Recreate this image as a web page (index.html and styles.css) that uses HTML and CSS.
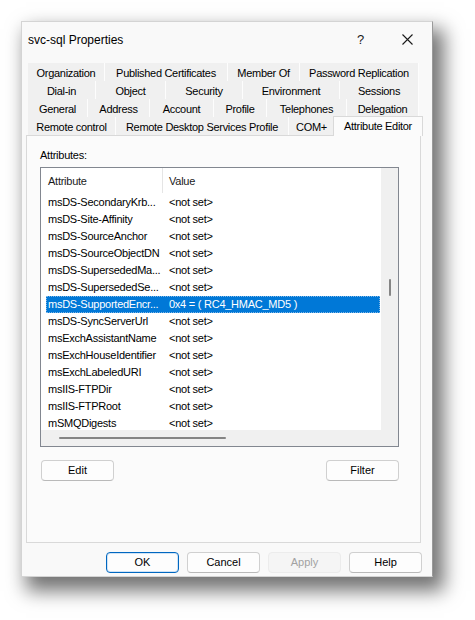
FILE: index.html
```html
<!DOCTYPE html>
<html>
<head>
<meta charset="utf-8">
<link rel="stylesheet" href="styles.css">
</head>
<body>
<div class="page">
<div class="dialog">
  <div class="titlebar">
    <span class="title">svc-sql Properties</span>
    <span class="help-q">?</span>
    <svg class="close" width="11" height="11" viewBox="0 0 11 11"><path d="M0.5 0.5 L10.5 10.5 M10.5 0.5 L0.5 10.5" stroke="#1a1a1a" stroke-width="1.1" fill="none"/></svg>
  </div>
  <div class="content">
    <div class="tabs">
      <div class="tabrow r1">
        <div class="tab">Organization</div>
        <div class="tab">Published Certificates</div>
        <div class="tab">Member Of</div>
        <div class="tab">Password Replication</div>
      </div>
      <div class="tabrow r2">
        <div class="tab">Dial-in</div>
        <div class="tab">Object</div>
        <div class="tab">Security</div>
        <div class="tab">Environment</div>
        <div class="tab">Sessions</div>
      </div>
      <div class="tabrow r3">
        <div class="tab">General</div>
        <div class="tab">Address</div>
        <div class="tab">Account</div>
        <div class="tab">Profile</div>
        <div class="tab">Telephones</div>
        <div class="tab">Delegation</div>
      </div>
      <div class="tabrow r4">
        <div class="tab">Remote control</div>
        <div class="tab">Remote Desktop Services Profile</div>
        <div class="tab">COM+</div>
        <div class="tab selected">Attribute Editor</div>
      </div>
    </div>
    <div class="panel">
      <div class="label">Attributes:</div>
      <div class="list">
        <div class="view">
          <div class="header">
            <div class="hcol first">Attribute</div>
            <div class="hcol">Value</div>
          </div>
          <div class="row"><span class="c1">msDS-SecondaryKrb...</span><span class="c2">&lt;not set&gt;</span></div>
          <div class="row"><span class="c1">msDS-Site-Affinity</span><span class="c2">&lt;not set&gt;</span></div>
          <div class="row"><span class="c1">msDS-SourceAnchor</span><span class="c2">&lt;not set&gt;</span></div>
          <div class="row"><span class="c1">msDS-SourceObjectDN</span><span class="c2">&lt;not set&gt;</span></div>
          <div class="row"><span class="c1">msDS-SupersededMa...</span><span class="c2">&lt;not set&gt;</span></div>
          <div class="row"><span class="c1">msDS-SupersededSe...</span><span class="c2">&lt;not set&gt;</span></div>
          <div class="row sel"><span class="c1">msDS-SupportedEncr...</span><span class="c2">0x4 = ( RC4_HMAC_MD5 )</span></div>
          <div class="row"><span class="c1">msDS-SyncServerUrl</span><span class="c2">&lt;not set&gt;</span></div>
          <div class="row"><span class="c1">msExchAssistantName</span><span class="c2">&lt;not set&gt;</span></div>
          <div class="row"><span class="c1">msExchHouseIdentifier</span><span class="c2">&lt;not set&gt;</span></div>
          <div class="row"><span class="c1">msExchLabeledURI</span><span class="c2">&lt;not set&gt;</span></div>
          <div class="row"><span class="c1">msIIS-FTPDir</span><span class="c2">&lt;not set&gt;</span></div>
          <div class="row"><span class="c1">msIIS-FTPRoot</span><span class="c2">&lt;not set&gt;</span></div>
          <div class="row"><span class="c1">mSMQDigests</span><span class="c2">&lt;not set&gt;</span></div>
        </div>
        <div class="vscroll"><div class="vthumb"></div></div>
        <div class="hscroll"><div class="hthumb"></div></div>
      </div>
      <div class="panel-buttons">
        <div class="btn">Edit</div>
        <div class="btn">Filter</div>
      </div>
    </div>
    <div class="footer">
      <div class="btn default">OK</div>
      <div class="btn">Cancel</div>
      <div class="btn disabled">Apply</div>
      <div class="btn">Help</div>
    </div>
  </div>
</div>
</div>
</body>
</html>
```

FILE: styles.css
```css
html, body {
  margin: 0;
  padding: 0;
  background: #ffffff;
}

body {
  font-family: "Liberation Sans", Arial, sans-serif;
  color: #000;
}

.page {
  width: 475px;
  height: 620px;
  padding: 21px 0 0 21px;
  box-sizing: border-box;
  overflow: hidden;
}

.dialog {
  width: 412px;
  height: 556px;
  box-sizing: border-box;
  background: #f9f9f9;
  border: 1px solid #d4d4d4;
  border-right-color: #9a9a9a;
  box-shadow: 8px 11px 18px 3px rgba(0, 0, 0, 0.55);
  display: flex;
  flex-direction: column;
}

.titlebar {
  height: 34px;
  display: flex;
  align-items: center;
  padding-left: 6px;
  padding-top: 1px;
  box-sizing: border-box;
}

.title {
  font-size: 12px;
  flex: 1;
  color: #000;
}

.help-q {
  font-size: 13px;
  width: 8px;
  margin-right: 37px;
  color: #1a1a1a;
}

.close {
  margin-right: 19px;
  display: block;
}

.content {
  padding: 7px 11px 0 4px;
  display: flex;
  flex-direction: column;
}

.tabs {
  margin: 0 2px;
  display: flex;
  flex-direction: column;
}

.tabrow {
  display: grid;
  height: 18px;
}

.r1 { grid-template-columns: 77px 123px 72px 119px; }
.r2 { grid-template-columns: 68px 70px 77px 97px 79px; }
.r3 { grid-template-columns: 60px 62px 64px 53px 80px 72px; }
.r4 { grid-template-columns: 88px 173px 46px 88px; margin-right: -2px; }

.tab {
  background: #f0f0f0;
  border-right: 1px solid #fdfdfd;
  border-bottom: 1px solid #fdfdfd;
  box-sizing: border-box;
  font-size: 11px;
  letter-spacing: -0.3px;
  line-height: 17px;
  padding-top: 2px;
  text-align: center;
  white-space: nowrap;
  color: #000;
}

.tab.selected {
  background: #fbfbfb;
  border: 1px solid #d9d9d9;
  border-bottom: none;
  height: 20px;
  margin-top: -1px;
  margin-left: -2px;
  line-height: 16px;
  padding-top: 1px;
  position: relative;
  z-index: 1;
}

.panel {
  height: 408px;
  box-sizing: border-box;
  border: 1px solid #d9d9d9;
  background: #fbfbfb;
  padding: 12px 0 0 13px;
}

.label {
  font-size: 11px;
  letter-spacing: -0.25px;
  line-height: 14px;
  height: 14px;
}

.list {
  margin-top: 5px;
  width: 359px;
  height: 280px;
  box-sizing: border-box;
  border: 1px solid #828790;
  background: #fff;
  display: grid;
  grid-template-columns: 340px 17px;
  grid-template-rows: 262px 16px;
}

.view {
  overflow: hidden;
  font-size: 11px;
  letter-spacing: -0.25px;
}

.header {
  height: 26px;
  display: flex;
}

.hcol {
  line-height: 26px;
  padding-left: 6px;
  color: #1a1a1a;
}

.hcol.first {
  width: 122px;
  box-sizing: border-box;
  padding-left: 7px;
  border-right: 1px solid #e5e5e5;
  height: 25px;
}

.row {
  margin-left: 5px;
  width: 334px;
  height: 17px;
  line-height: 17px;
  display: flex;
  white-space: nowrap;
  box-sizing: border-box;
}

.row .c1 {
  width: 117px;
  padding-left: 2px;
  box-sizing: border-box;
  overflow: hidden;
}

.row .c2 {
  padding-left: 6px;
}

.row.sel {
  background: #0078d7;
  color: #fff;
  outline: 1px dotted #7fb6e6;
  outline-offset: -1px;
}

.vscroll {
  background: #f0f0f0;
  grid-row: 1 / 3;
  grid-column: 2;
  display: flex;
  flex-direction: column;
  align-items: center;
}

.vthumb {
  margin-top: 111px;
  width: 2px;
  height: 17px;
  background: #858585;
  border-radius: 1px;
}

.hscroll {
  background: #f0f0f0;
  grid-row: 2;
  grid-column: 1;
  padding: 7px 0 0 18px;
  box-sizing: border-box;
}

.hthumb {
  width: 167px;
  height: 2px;
  background: #858585;
  border-radius: 1px;
}

.panel-buttons {
  margin-top: 13px;
  width: 358px;
  padding-left: 1px;
  display: flex;
  justify-content: space-between;
}

.btn {
  width: 73px;
  height: 21px;
  box-sizing: border-box;
  border: 1px solid #d0d0d0;
  border-bottom-color: #b9b9b9;
  border-radius: 4px;
  background: #fdfdfd;
  font-size: 11px;
  line-height: 19px;
  text-align: center;
  color: #000;
}

.btn.default {
  border: 1px solid #0067c0;
  box-shadow: inset 0 0 0 1px #cfe3f6;
}

.btn.disabled {
  border-color: #ececec;
  background: #f5f5f5;
  color: #a2a2a2;
}

.footer {
  margin-top: 9px;
  display: flex;
  justify-content: flex-end;
  gap: 8px;
  margin-right: -1px;
}
```
